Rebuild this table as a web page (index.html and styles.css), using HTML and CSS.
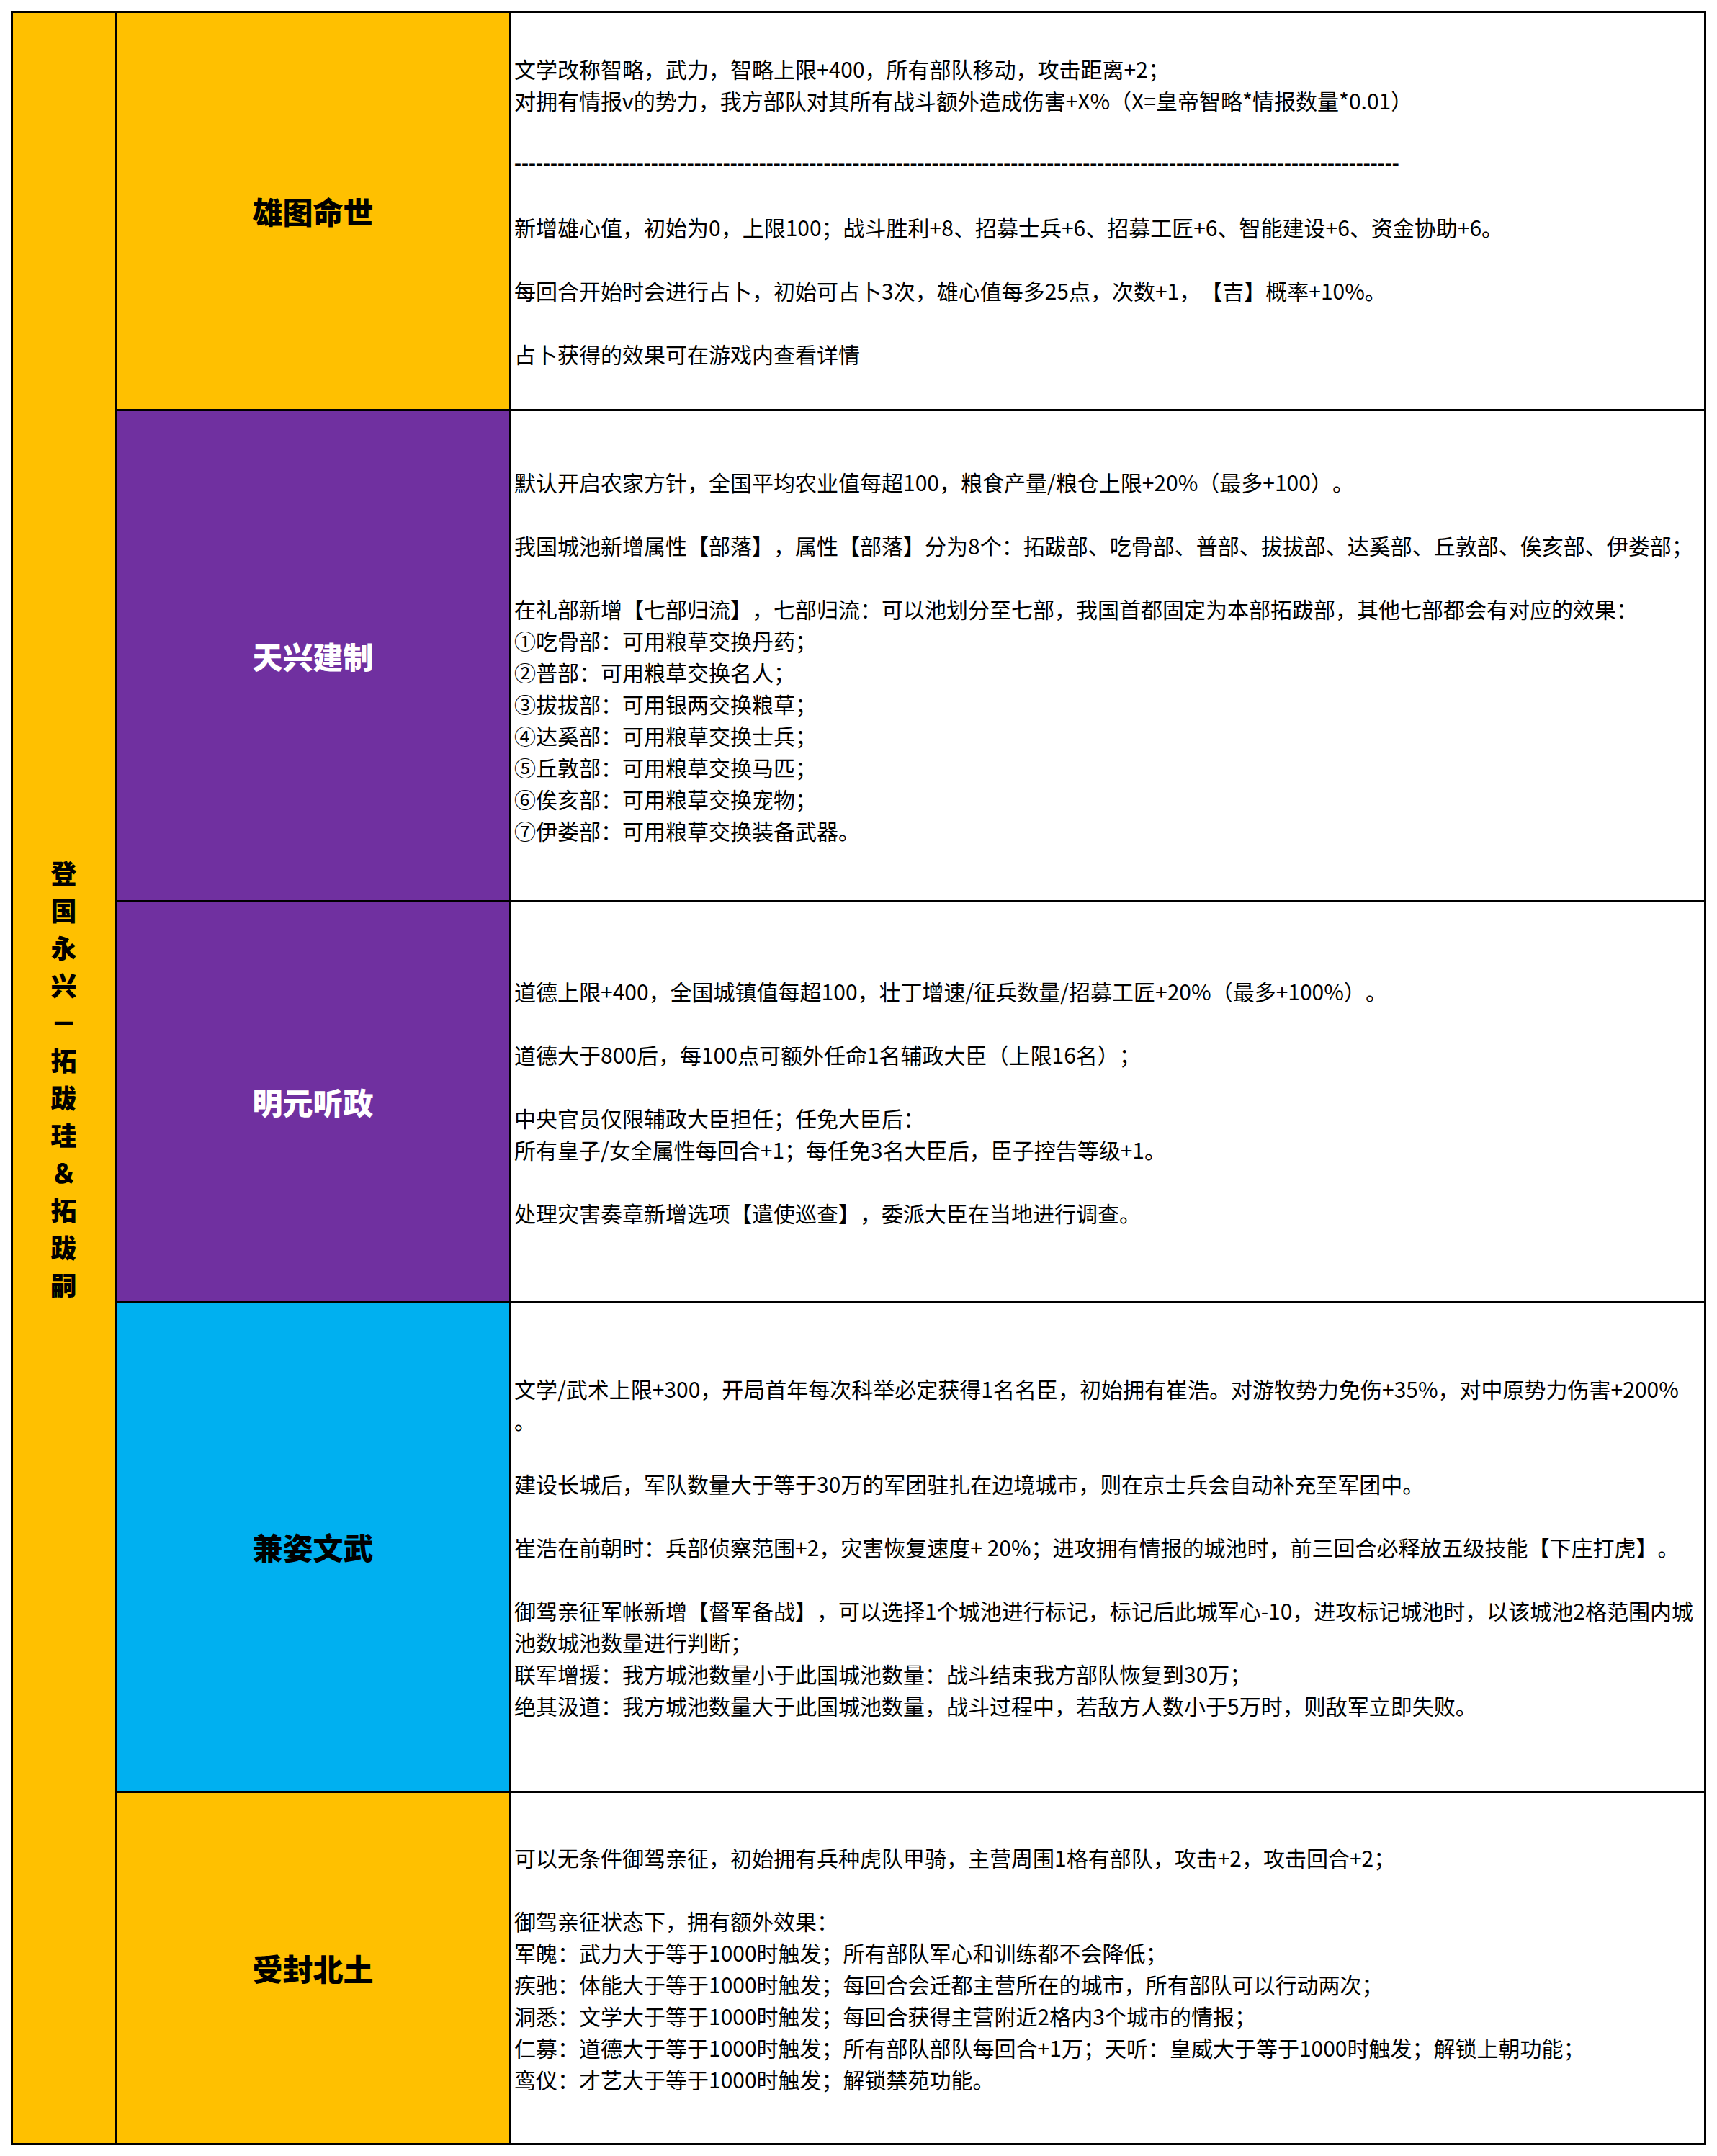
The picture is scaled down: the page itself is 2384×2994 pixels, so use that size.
FILE: index.html
```html
<!DOCTYPE html>
<html lang="zh-CN">
<head>
<meta charset="utf-8">
<title>登国永兴－拓跋珪＆拓跋嗣</title>
<link rel="stylesheet" href="styles.css">
</head>
<body>
<div class="sheet">
  <div class="era">
    <span>登</span><span>国</span><span>永</span><span>兴</span><span>－</span><span>拓</span><span>跋</span><span>珪</span><span>＆</span><span>拓</span><span>跋</span><span>嗣</span>
  </div>

  <div class="name gold r1">雄图命世</div>
  <div class="desc r1">
    <div class="lines">
      <p>文学改称智略，武力，智略上限+400，所有部队移动，攻击距离+2；</p>
      <p>对拥有情报v的势力，我方部队对其所有战斗额外造成伤害+X%（X=皇帝智略*情报数量*0.01）</p>
      <p class="blank"></p>
      <p class="dashes">---------------------------------------------------------------------------------------------------------------------------</p>
      <p class="blank"></p>
      <p>新增雄心值，初始为0，上限100；战斗胜利+8、招募士兵+6、招募工匠+6、智能建设+6、资金协助+6。</p>
      <p class="blank"></p>
      <p>每回合开始时会进行占卜，初始可占卜3次，雄心值每多25点，次数+1，【吉】概率+10%。</p>
      <p class="blank"></p>
      <p>占卜获得的效果可在游戏内查看详情</p>
    </div>
  </div>

  <div class="name purple r2">天兴建制</div>
  <div class="desc r2">
    <div class="lines">
      <p>默认开启农家方针，全国平均农业值每超100，粮食产量/粮仓上限+20%（最多+100）。</p>
      <p class="blank"></p>
      <p>我国城池新增属性【部落】，属性【部落】分为8个：拓跋部、吃骨部、普部、拔拔部、达奚部、丘敦部、俟亥部、伊娄部；</p>
      <p class="blank"></p>
      <p>在礼部新增【七部归流】，七部归流：可以池划分至七部，我国首都固定为本部拓跋部，其他七部都会有对应的效果：</p>
      <p>①吃骨部：可用粮草交换丹药；</p>
      <p>②普部：可用粮草交换名人；</p>
      <p>③拔拔部：可用银两交换粮草；</p>
      <p>④达奚部：可用粮草交换士兵；</p>
      <p>⑤丘敦部：可用粮草交换马匹；</p>
      <p>⑥俟亥部：可用粮草交换宠物；</p>
      <p>⑦伊娄部：可用粮草交换装备武器。</p>
    </div>
  </div>

  <div class="name purple r3">明元听政</div>
  <div class="desc r3">
    <div class="lines">
      <p>道德上限+400，全国城镇值每超100，壮丁增速/征兵数量/招募工匠+20%（最多+100%）。</p>
      <p class="blank"></p>
      <p>道德大于800后，每100点可额外任命1名辅政大臣（上限16名）；</p>
      <p class="blank"></p>
      <p>中央官员仅限辅政大臣担任；任免大臣后：</p>
      <p>所有皇子/女全属性每回合+1；每任免3名大臣后，臣子控告等级+1。</p>
      <p class="blank"></p>
      <p>处理灾害奏章新增选项【遣使巡查】，委派大臣在当地进行调查。</p>
    </div>
  </div>

  <div class="name cyan r4">兼姿文武</div>
  <div class="desc r4">
    <div class="lines">
      <p>文学/武术上限+300，开局首年每次科举必定获得1名名臣，初始拥有崔浩。对游牧势力免伤+35%，对中原势力伤害+200%</p>
      <p>。</p>
      <p class="blank"></p>
      <p>建设长城后，军队数量大于等于30万的军团驻扎在边境城市，则在京士兵会自动补充至军团中。</p>
      <p class="blank"></p>
      <p>崔浩在前朝时：兵部侦察范围+2，灾害恢复速度+ 20%；进攻拥有情报的城池时，前三回合必释放五级技能【下庄打虎】。</p>
      <p class="blank"></p>
      <p>御驾亲征军帐新增【督军备战】，可以选择1个城池进行标记，标记后此城军心-10，进攻标记城池时，以该城池2格范围内城</p>
      <p>池数城池数量进行判断；</p>
      <p>联军增援：我方城池数量小于此国城池数量：战斗结束我方部队恢复到30万；</p>
      <p>绝其汲道：我方城池数量大于此国城池数量，战斗过程中，若敌方人数小于5万时，则敌军立即失败。</p>
    </div>
  </div>

  <div class="name gold r5">受封北土</div>
  <div class="desc r5">
    <div class="lines">
      <p>可以无条件御驾亲征，初始拥有兵种虎队甲骑，主营周围1格有部队，攻击+2，攻击回合+2；</p>
      <p class="blank"></p>
      <p>御驾亲征状态下，拥有额外效果：</p>
      <p>军魄：武力大于等于1000时触发；所有部队军心和训练都不会降低；</p>
      <p>疾驰：体能大于等于1000时触发；每回合会迁都主营所在的城市，所有部队可以行动两次；</p>
      <p>洞悉：文学大于等于1000时触发；每回合获得主营附近2格内3个城市的情报；</p>
      <p>仁募：道德大于等于1000时触发；所有部队部队每回合+1万；天听：皇威大于等于1000时触发；解锁上朝功能；</p>
      <p>鸾仪：才艺大于等于1000时触发；解锁禁苑功能。</p>
    </div>
  </div>
</div>
</body>
</html>
```
FILE: styles.css
```css
html, body {
  margin: 0;
  padding: 0;
  background: #ffffff;
}

body {
  font-family: "Noto Sans CJK SC", "Noto Sans", sans-serif;
  color: #000000;
  text-spacing-trim: space-all;
  font-kerning: none;
}

.sheet {
  margin: 15px 0 0 15px;
  width: 2354px;
  height: 2964px;
  box-sizing: border-box;
  padding: 3px;
  background: #000000;
  display: grid;
  grid-template-columns: 141px 545px 1fr;
  grid-template-rows: 550px 679px 553px 678px 486px;
  gap: 3px;
}

.era {
  grid-column: 1;
  grid-row: 1 / span 5;
  background: #ffc000;
  display: flex;
  flex-direction: column;
  align-items: center;
  justify-content: center;
  font-size: 36px;
  font-weight: 900;
  line-height: 52px;
}

.era span {
  display: block;
}

.name {
  grid-column: 2;
  display: flex;
  align-items: center;
  justify-content: center;
  font-size: 42px;
  font-weight: 900;
  line-height: 1;
}

.gold { background: #ffc000; color: #000000; }
.purple { background: #7030a0; color: #ffffff; }
.cyan { background: #00b0f0; color: #000000; }

.r1 { grid-row: 1; }
.r2 { grid-row: 2; }
.r3 { grid-row: 3; }
.r4 { grid-row: 4; }
.r5 { grid-row: 5; }

.desc {
  grid-column: 3;
  background: #ffffff;
  display: flex;
  align-items: center;
  padding-left: 4px;
  overflow: hidden;
}

.lines {
  font-size: 30px;
  line-height: 44px;
}

.lines p {
  margin: 0;
  white-space: nowrap;
  height: 44px;
}

.lines .dashes {
  font-family: "Liberation Sans", sans-serif;
  font-weight: 700;
  letter-spacing: 0;
}
```
